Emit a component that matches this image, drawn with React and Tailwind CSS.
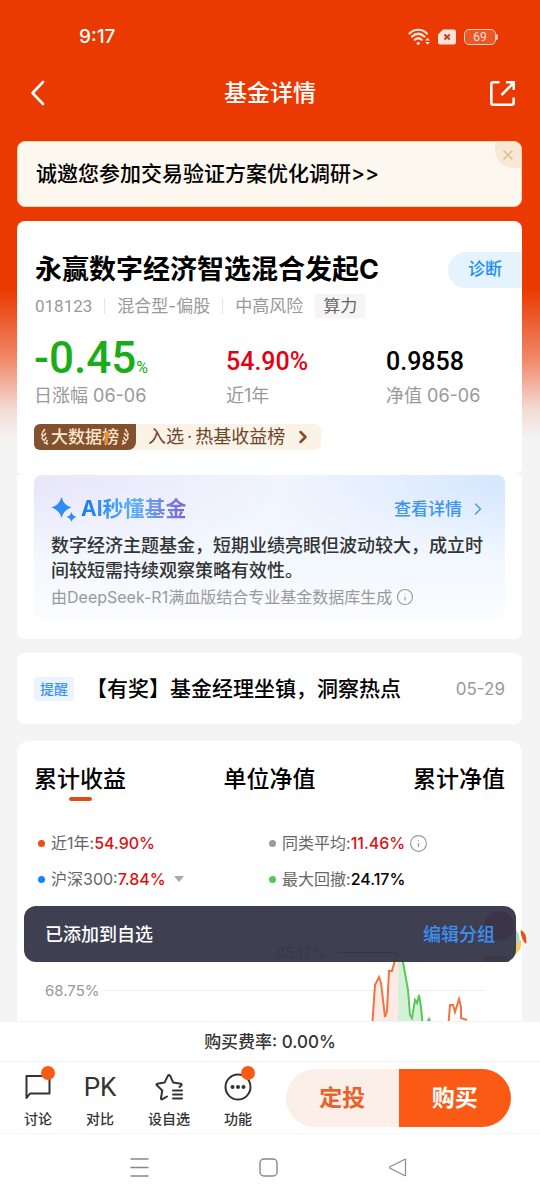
import React from 'react';
import { X, Info, ChevronRight } from 'lucide-react';

const StatusIcons = () => (
  <div className="flex items-center gap-2 text-[#ffe3da]">
    <svg width="22" height="18" viewBox="0 0 22 18" fill="none" stroke="currentColor" strokeWidth="2.2" strokeLinecap="round">
      <path d="M1.5 5.5C6.5 0.5 14 0.5 19 5.5" />
      <path d="M4 8.6C8 5 12.6 5 16.5 8.6" />
      <path d="M6.8 11.8C9 9.8 11.5 9.8 13.7 11.8" />
      <circle cx="10.2" cy="15.3" r="1.6" fill="currentColor" stroke="none" />
      <path d="M17.2 12.6L19.5 9.8L21.8 12.6ZM17.2 14L19.5 16.8L21.8 14Z" fill="currentColor" stroke="none" />
    </svg>
    <svg width="18" height="16" viewBox="0 0 18 16">
      <path d="M5 0.5H16Q18 0.5 18 2.5V13.5Q18 15.5 16 15.5H2Q0 15.5 0 13.5V5.5Z" fill="currentColor" />
      <path d="M6.5 5.5L11.8 10.5M11.8 5.5L6.5 10.5" stroke="#c8401a" strokeWidth="2" />
    </svg>
    <div className="flex items-center">
      <span className="flex h-4 w-8 items-center justify-center rounded-[5px] border border-[#ffd0c0] bg-white/15 font-['Roboto'] text-[12px] leading-none">69</span>
      <span className="h-1.5 w-0.5 rounded-r bg-[#ffd0c0]" />
    </div>
  </div>
);

const Header = () => (
  <header>
    <div className="flex h-[57px] items-end justify-between pr-[42px] pb-2 pl-[79px]">
      <span className="font-['Inter'] text-[19px] leading-6 font-medium text-white">9:17</span>
      <div className="flex h-6 items-center">
        <StatusIcons />
      </div>
    </div>
    <div className="flex h-[72px] items-center justify-between px-6 text-white">
      <button type="button" aria-label="返回" className="flex w-7 justify-center">
        <svg width="16" height="26" viewBox="0 0 16 26" fill="none" stroke="currentColor" strokeWidth="2.6" strokeLinecap="round" strokeLinejoin="round">
          <path d="M13 2L2.5 13L13 24" />
        </svg>
      </button>
      <h1 className="text-[23px] leading-8 font-medium">基金详情</h1>
      <button type="button" aria-label="分享" className="flex w-7 justify-end">
        <svg width="27" height="27" viewBox="0 0 27 27" fill="none" stroke="currentColor" strokeWidth="2.6">
          <path d="M10.5 2.3H4.3Q2.3 2.3 2.3 4.3V22.7Q2.3 24.7 4.3 24.7H22.7Q24.7 24.7 24.7 22.7V17.5" />
          <path d="M12.5 15L23 4.5" />
          <path d="M17 1H26V10L23.5 10V3.5H17Z" fill="currentColor" stroke="none" />
          <path d="M19 1H26V8Z" fill="currentColor" stroke="none" />
        </svg>
      </button>
    </div>
  </header>
);

const SurveyBanner = () => (
  <div className="relative flex h-[66px] items-center rounded-lg border border-[#f6d9a8] bg-[#fdf8ef] px-[18px]">
    <a href="#survey" className="text-[21px] leading-8 font-medium text-black">诚邀您参加交易验证方案优化调研&gt;&gt;</a>
    <button type="button" aria-label="关闭" className="absolute top-0 right-0 flex h-[26px] w-[26px] items-center justify-center rounded-tr-lg rounded-bl-[18px] bg-[#f9e8d5] text-[#dfb98c]">
      <X size={16} strokeWidth={2} />
    </button>
  </div>
);

const Laurel = ({ flip }) => (
  <svg width="9" height="18" viewBox="0 0 9 18" fill="none" stroke="#f7dfc0" strokeWidth="1.6" strokeLinecap="round" className={flip ? '-scale-x-100' : ''}>
    <path d="M4.5 1.5L3 4M2 5.5L2.5 8.5M5.5 5.5L4 7.5M2 10L4 12.5M6 9.5L5 11.5M4.5 14.5L7.5 16M7 12.5L6.8 14" />
  </svg>
);

const FundSummary = () => (
  <section className="rounded-lg bg-white pt-[30px] pb-[23px]">
    <div className="flex h-[38px] items-center justify-between pl-[18px]">
      <h2 className="text-[27px] leading-[38px] font-bold text-black">永赢数字经济智选混合发起C</h2>
      <button type="button" className="h-9 rounded-l-full bg-[#e5f3fe] px-5 text-[17px] font-medium text-[#1890f0]">诊断</button>
    </div>
    <div className="flex h-[34px] items-center pl-[18px] text-[17px] leading-6 text-[#999]">
      <span className="font-['Roboto']">018123</span>
      <span className="mx-3 h-4 w-px bg-[#e6e6e6]" />
      <span>混合型-偏股</span>
      <span className="mx-3 h-4 w-px bg-[#e6e6e6]" />
      <span>中高风险</span>
      <span className="ml-3 bg-[#f5f5f5] px-2 text-[#666]">算力</span>
    </div>
    <div className="mt-[9px] grid grid-cols-[192px_160px_1fr] pl-[17px]">
      <div>
        <div className="flex h-[52px] items-baseline font-['Roboto'] text-[#1aad19]">
          <span className="text-[44px] leading-[52px] font-medium">-0.45</span>
          <span className="text-[16px]">%</span>
        </div>
        <p className="text-[18px] leading-6 text-[#999]">日涨幅 06-06</p>
      </div>
      <div>
        <p className="pt-2 font-['Roboto'] text-[25px] leading-[44px] font-medium text-[#e60012]">54.90%</p>
        <p className="text-[18px] leading-6 text-[#999]">近1年</p>
      </div>
      <div>
        <p className="pt-2 font-['Roboto'] text-[25px] leading-[44px] font-medium text-black">0.9858</p>
        <p className="text-[18px] leading-6 text-[#999]">净值 06-06</p>
      </div>
    </div>
    <a href="#rank" className="mt-4 ml-[17px] inline-flex h-[26px] items-center rounded-md bg-[#fcf3e8] pr-2">
      <span className="relative flex h-[26px] items-center gap-0.5 rounded-tl-md rounded-br-lg rounded-bl-md bg-[#83512f] px-1.5 text-[17px] leading-6 font-medium text-[#fbe6cc]">
        <Laurel />
        <span>大数据榜</span>
        <Laurel flip />
        <svg width="7" height="13" viewBox="0 0 7 13" fill="#f58a1f" className="absolute top-[7px] left-[69px]">
          <path d="M3.5 0L7 4.5H5V13H2V4.5H0Z" />
        </svg>
      </span>
      <span className="pl-3 text-[18px] leading-6 text-[#6b4528]">入选<span className="mx-[3px]">·</span>热基收益榜</span>
      <ChevronRight size={20} strokeWidth={3} className="ml-2 text-[#8a4a22]" />
    </a>
  </section>
);

const AiInsight = () => (
  <section className="rounded-b-lg bg-white px-[17px] pb-5">
    <div className="rounded-lg bg-[linear-gradient(180deg,transparent_10%,#f3f8ff_60%,#fafcff_100%),linear-gradient(100deg,#e9e6fa_0%,#f1f5fe_50%,#d3e6fe_100%)] px-[17px] pt-[18px] pb-2">
      <div className="flex h-8 items-center justify-between">
        <div className="flex items-center gap-1">
          <svg width="26" height="26" viewBox="0 0 26 26" fill="#2f8bf5">
            <path d="M10.5 1Q12.5 9 20.5 11.5Q12.5 14 10.5 22Q8.5 14 0.5 11.5Q8.5 9 10.5 1Z" />
            <path d="M20.5 16Q21.5 20 25.5 21Q21.5 22 20.5 26Q19.5 22 15.5 21Q19.5 20 20.5 16Z" />
          </svg>
          <h3 className="bg-linear-to-r from-[#1677f0] via-[#5ab0f5] to-[#7a62d8] bg-clip-text text-[21px] leading-8 font-bold text-transparent">AI秒懂基金</h3>
        </div>
        <a href="#ai-detail" className="flex items-center gap-1.5 text-[17px] leading-6 font-medium text-[#3d94f0]">
          查看详情
          <ChevronRight size={20} strokeWidth={1.5} />
        </a>
      </div>
      <p className="mt-2 text-[18px] leading-[25px] font-medium text-[#333]">数字经济主题基金，短期业绩亮眼但波动较大，成立时间较短需持续观察策略有效性。</p>
      <p className="flex items-center gap-1 text-[16px] leading-7 text-[#999]">
        由DeepSeek-R1满血版结合专业基金数据库生成
        <Info size={18} strokeWidth={1.5} />
      </p>
    </div>
  </section>
);

const Reminder = () => (
  <a href="#notice" className="flex h-[71px] items-center rounded-lg bg-white px-[17px]">
    <span className="rounded bg-[#eaf3fe] px-[6px] text-[14px] leading-6 font-medium text-[#3d94f0]">提醒</span>
    <span className="ml-3 flex-1 truncate text-[21px] leading-8 font-medium text-black">【有奖】基金经理坐镇，洞察热点</span>
    <span className="text-[17px] leading-6 text-[#999]">05-29</span>
  </a>
);

const Legend = ({ dot, label, value, valueColor, children }) => (
  <div className="flex h-9 items-center text-[16px] leading-6">
    <span className={`mr-[6px] h-[7px] w-[7px] rounded-full ${dot}`} />
    <span className="text-[#666]">{label}:</span>
    <span className={`font-medium ${valueColor}`}>{value}</span>
    {children}
  </div>
);

const Chart = () => (
  <svg width="100%" height="160" viewBox="0 0 505 160" className="mt-0.5 block">
    <g className="font-['Inter'] text-[15px]">
      <text x="28" y="97" fill="#999">68.75%</text>
      <text x="259" y="59" fill="#555">85.17%</text>
    </g>
    <path d="M88 91.5H468" stroke="#eee" />
    <path d="M321 53.5H381" stroke="#333" />
    <path d="M355 130L358 86L362 78L368 118L372 72H375L378 61L381 54V130Z" fill="#fdeae4" />
    <path d="M381 54L386 63L391 91L393 116L395 119L398 101L400 104L402 96L406 130H381Z" fill="#d3f2d5" />
    <path d="M355 130L358 86L362 78L364 84L368 118L370 112L372 72H375L378 61L381 54" fill="none" stroke="#ee7444" strokeWidth="2" />
    <path d="M381 54L386 63L391 91L393 116L395 119L398 101L400 104L402 96L404 108L406 130" fill="none" stroke="#5cc55c" strokeWidth="2" />
    <path d="M410 124L412 120L414 124" fill="none" stroke="#5cc55c" strokeWidth="2" />
    <path d="M431 130L433 106H436L438 113L442 100L444 108V119L450 121" fill="none" stroke="#ee7444" strokeWidth="2" />
  </svg>
);

const Performance = () => (
  <section className="mt-[3px] rounded-t-xl bg-white pt-5">
    <div role="tablist" className="flex justify-between px-[17px] text-[23px] leading-9 font-medium text-black">
      <button type="button" role="tab" aria-selected="true" className="flex flex-col items-center">
        累计收益
        <span className="h-1 w-[23px] rounded-full bg-[#e04e18]" />
      </button>
      <button type="button" role="tab" aria-selected="false" className="self-start">单位净值</button>
      <button type="button" role="tab" aria-selected="false" className="self-start">累计净值</button>
    </div>
    <div className="mt-6 grid grid-cols-[231px_1fr] pl-[21px]">
      <Legend dot="bg-[#ef4b12]" label="近1年" value="54.90%" valueColor="text-[#dd1111]" />
      <Legend dot="bg-[#999]" label="同类平均" value="11.46%" valueColor="text-[#dd1111]">
        <Info size={19} strokeWidth={1.5} className="ml-1 text-[#999]" />
      </Legend>
      <Legend dot="bg-[#1686f5]" label="沪深300" value="7.84%" valueColor="text-[#dd1111]">
        <span className="ml-2 border-x-[5px] border-t-[6px] border-x-transparent border-t-[#aaa]" />
      </Legend>
      <Legend dot="bg-[#56c758]" label="最大回撤" value="24.17%" valueColor="text-black" />
    </div>
    <Chart />
  </section>
);

// floating promo mascot, mostly hidden under the toast
const Mascot = () => (
  <svg width="44" height="56" viewBox="0 0 44 56" className="absolute right-[13px] bottom-[59px]">
    <circle cx="16" cy="20" r="15" fill="#b8202a" />
    <path d="M2 50H26V56H2Z" fill="#e8552a" />
    <path d="M33 24Q38 30 36 38L30 46V26Z" fill="#a8d8c0" />
    <path d="M38 34Q40 44 30 50V40Z" fill="#f6c765" />
    <path d="M38 24Q44 27 43.5 37Q42 39 39 32Q37 26 38 24Z" fill="#ea4f1c" />
  </svg>
);

const Toast = () => (
  <div role="status" className="absolute inset-x-6 bottom-[59px] flex h-14 items-center justify-between rounded-xl bg-[#343649]/95 px-[21px] pt-0.5 text-[18px] leading-6 font-medium">
    <span className="text-white">已添加到自选</span>
    <button type="button" className="text-[#3f8ff2]">编辑分组</button>
  </div>
);

const ToolButton = ({ label, badge, children }) => (
  <button type="button" className="flex flex-col items-center text-[#333]">
    <span className="relative flex h-8 w-7 items-center justify-center">
      {children}
      {badge && <span className="absolute -top-[5px] -right-[3px] h-[14px] w-[14px] rounded-full bg-[#fa5a14]" />}
    </span>
    <span className="mt-1 text-[14px] leading-6 font-medium">{label}</span>
  </button>
);

const BottomBar = () => (
  <footer className="bg-white">
    <p className="flex h-[41px] items-center justify-center border-y border-[#f3f3f3] pt-0.5 text-[17px] font-medium text-[#333]">购买费率: 0.00%</p>
    <div className="flex h-[72px] items-center border-b border-[#f6f6f6] pr-[29px] pl-6">
      <div className="flex gap-[34px] pt-1.5">
        <ToolButton label="讨论" badge>
          <svg width="26" height="26" viewBox="0 0 26 26" fill="none" stroke="currentColor" strokeWidth="2" strokeLinejoin="round">
            <path d="M1.5 2H24.5V19.5H5L1.5 24Z" />
          </svg>
        </ToolButton>
        <ToolButton label="对比">
          <span className="font-['Roboto'] text-[26px] leading-8">PK</span>
        </ToolButton>
        <ToolButton label="设自选">
          <svg width="28" height="28" viewBox="0 0 28 28" fill="none" stroke="currentColor" strokeWidth="2" strokeLinejoin="round" strokeLinecap="round">
            <path d="M12 23.5L7.5 26.2Q5.8 26.8 6 25L7.3 17.5L1.8 12.3Q1 11.1 2.4 10.8L9.5 9.6L13 2.6Q14 1.2 15 2.6L18.3 9.6L25.8 10.8Q27.2 11.2 26.2 12.4L24.5 14" />
            <path d="M18 17.5H27M18 21.5H27M18 25.5H27" />
          </svg>
        </ToolButton>
        <ToolButton label="功能" badge>
          <svg width="28" height="28" viewBox="0 0 28 28" fill="none" stroke="currentColor" strokeWidth="2">
            <circle cx="14" cy="14" r="12.5" />
            <g fill="currentColor" stroke="none">
              <circle cx="8.5" cy="14" r="2" />
              <circle cx="14" cy="14" r="2" />
              <circle cx="19.5" cy="14" r="2" />
            </g>
          </svg>
        </ToolButton>
      </div>
      <div className="ml-[34px] flex h-[58px] flex-1 overflow-hidden rounded-full text-[23px] font-bold">
        <button type="button" className="flex-1 bg-[#fceee8] pt-0.5 text-[#e8622a]">定投</button>
        <button type="button" className="flex-1 bg-[#fb5a14] pt-0.5 text-white">购买</button>
      </div>
    </div>
    <nav className="flex h-[66px] items-center justify-center gap-[110px] pr-[3px] text-[#888]">
      <button type="button" aria-label="最近任务">
        <svg width="19" height="19" viewBox="0 0 19 19" stroke="currentColor" strokeWidth="1.4"><path d="M0.5 1H18.5M0.5 9.5H18.5M0.5 18H18.5" /></svg>
      </button>
      <button type="button" aria-label="主页">
        <svg width="19" height="19" viewBox="0 0 19 19" fill="none" stroke="currentColor" strokeWidth="1.4"><rect x="1" y="1" width="17" height="17" rx="4" /></svg>
      </button>
      <button type="button" aria-label="返回上一页">
        <svg width="19" height="19" viewBox="0 0 19 19" fill="none" stroke="currentColor" strokeWidth="1.2" strokeLinejoin="round"><path d="M17.5 2V17Q17.5 18 16.5 17.5L2 10.2Q1.2 9.5 2 8.8L16.5 1.5Q17.5 1 17.5 2Z" /></svg>
      </button>
    </nav>
  </footer>
);

export default function App() {
  return (
    <div className="flex h-screen flex-col overflow-hidden bg-[#f4f4f4] font-['Inter','Noto_Sans_CJK_SC',sans-serif]">
      <div className="relative min-h-0 flex-1 overflow-hidden bg-[linear-gradient(180deg,#ea3a02_0px,#ea3a02_290px,#f08a6a_360px,#f4dcd5_410px,#f4f4f4_440px)]">
        <Header />
        <main className="flex flex-col gap-[14px] pt-3 pr-[18px] pl-[17px]">
          <SurveyBanner />
          <div>
            <FundSummary />
            <AiInsight />
          </div>
          <Reminder />
          <Performance />
        </main>
        <Mascot />
        <Toast />
      </div>
      <BottomBar />
    </div>
  );
}
